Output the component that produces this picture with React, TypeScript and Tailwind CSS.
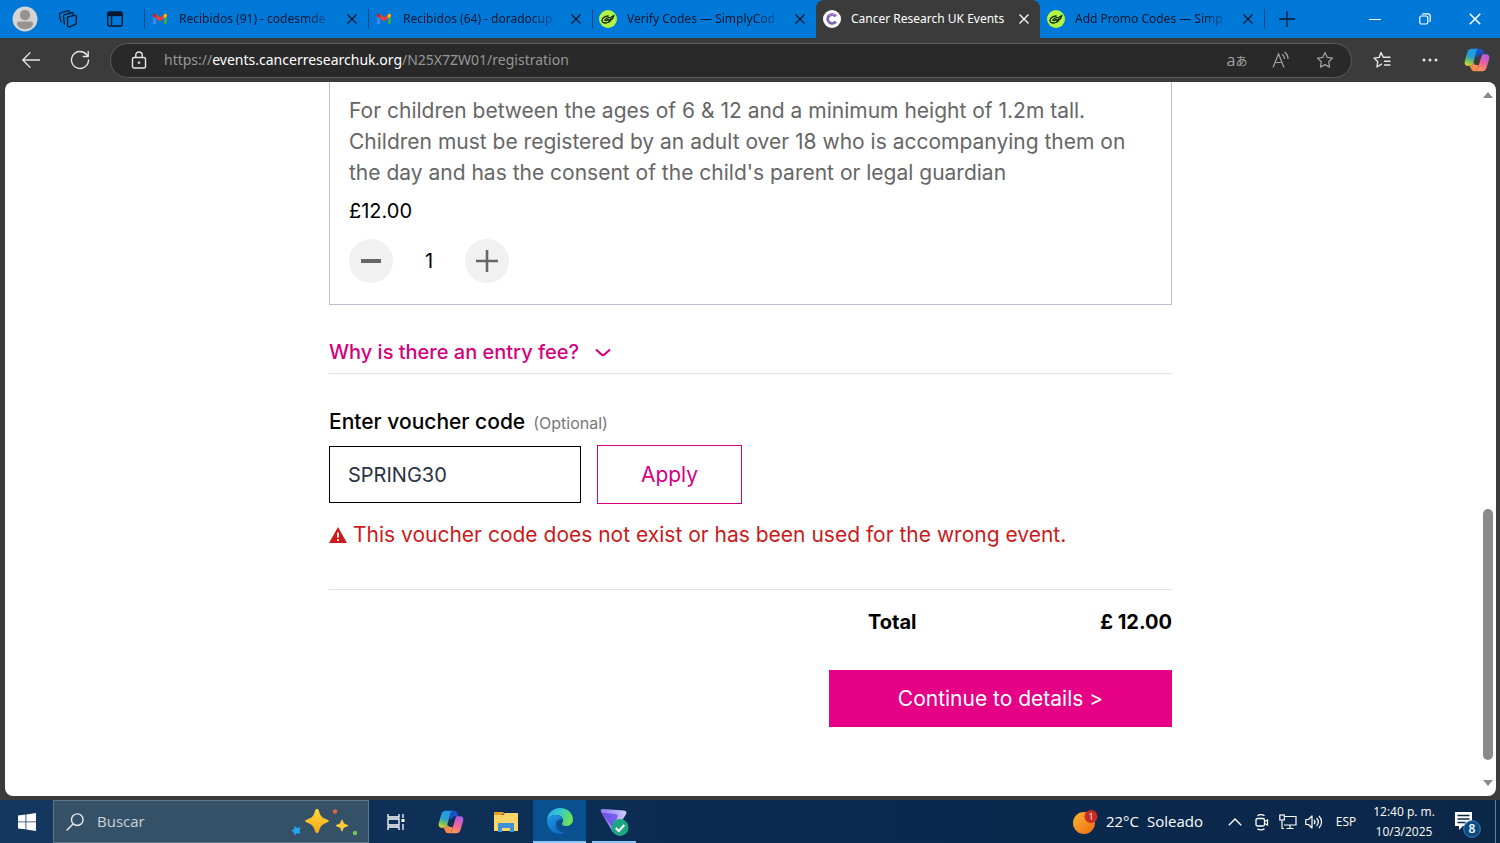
import { useState } from 'react';
import type { ReactNode } from 'react';

type IconProps = { className?: string };

function GmailIcon() {
  return (
    <svg viewBox="0 0 18 14" className="h-3 w-4 shrink-0">
      <path d="M1 2.500V13h3.500V5.500z" fill="#4285f4" />
      <path d="M17 2.500V13h-3.500V5.500z" fill="#34a853" />
      <path d="M1 2.500C1 .6 2.700.3 4 1.300L9 5.300l5-4v4.600L9 9.800 4 5.900 1 3.500z" fill="#ea4335" />
      <path d="M13.500 1.700C15.300.3 17 .6 17 2.500v1.200l-3.500 2.800z" fill="#fbbc04" />
      <path d="M1 2.500C1 1 2.600.3 4.500 1.700v4.800L1 3.700z" fill="#c5221f" />
    </svg>
  );
}

function SimplyIcon() {
  return (
    <svg viewBox="0 0 18 18" className="size-[18px] shrink-0">
      <circle cx="9" cy="9" r="9" fill="#b0f545" />
      <g fill="none" stroke="#14230a" strokeWidth="1.300" strokeLinecap="round" strokeLinejoin="round">
        <path d="M9.200 6C5.500 6 3 8.300 3 10.500c0 2.500 3.200 3 5.700 2 2-.8 3-2.200 2.800-3.500" />
        <path d="M6 10c.8-1.700 3-2.700 6-2.700l3-1.800-1.500 3c-1.200 1.600-3 1.800-4.500 1.500" />
        <path d="M6 10.200c1 .6 2 .3 3.200-.7" />
      </g>
    </svg>
  );
}

function CancerResearchIcon() {
  return (
    <svg viewBox="0 0 18 18" className="size-[18px] shrink-0">
      <circle cx="9" cy="9" r="9" fill="#fff" />
      <path d="M12.800 6.600A4.400 4.400 0 1 0 12.800 11.400" fill="none" stroke="#7a63b4" strokeWidth="2.800" />
      <path d="M12.800 6.600A4.400 4.400 0 0 0 6 5.800M5.500 11.500l1 1" fill="none" stroke="#c98acb" strokeWidth="1.400" strokeDasharray="1.500 1.200" />
    </svg>
  );
}

function CloseIcon({ className }: IconProps) {
  return (
    <svg viewBox="0 0 12 12" className={className} fill="none" stroke="currentColor" strokeWidth="1.300">
      <path d="M1.500 1.500l9 9M10.500 1.500l-9 9" />
    </svg>
  );
}

function CopilotIcon({ id }: { id: string }) {
  return (
    <svg viewBox="0 0 26 24" className="h-6 w-[26px]">
      <defs>
        <linearGradient id={`${id}-a`} x1=".5" y1="0" x2=".2" y2="1">
          <stop offset="0" stopColor="#1b9bf0" />
          <stop offset=".45" stopColor="#2a9fd0" />
          <stop offset=".75" stopColor="#7cc557" />
          <stop offset="1" stopColor="#f5d32a" />
        </linearGradient>
        <linearGradient id={`${id}-b`} x1=".6" y1="0" x2=".3" y2="1">
          <stop offset="0" stopColor="#b15be8" />
          <stop offset=".5" stopColor="#f0609a" />
          <stop offset="1" stopColor="#fd9a52" />
        </linearGradient>
      </defs>
      <path d="M8 .8h7c-1.600.6-2.300 2-2.800 3.700L9.300 14.700C8.600 17 7.500 17.800 5.500 17.800H4C1.200 17.800.200 15.700.8 13.200l2.500-9C3.900 2 5.400.8 8 .8z" fill={`url(#${id}-a)`} />
      <path d="M14 .8h2.500c1.600 0 2.400 1 2.900 2.500l.8 2.900h-2.700c-1.700 0-2.600.8-3.200 2.300l-1.500.5-1.500-.5 1.200-4.300c.4-1.600.6-2.700 1.500-3.400z" fill="#1c50c4" />
      <path d="M19 6.200h3c2.800 0 3.800 2 3.200 4.600l-2.500 8.800c-.6 2.400-2.100 3.600-4.500 3.600h-6.500c1.300-.7 2-2 2.500-3.700l2.800-9.800c.4-1.600.8-2.800 2-3.500z" fill={`url(#${id}-b)`} />
      <path d="M5.500 17.800c2 0 3.100-.8 3.800-3.100l2.200 2.300h3.200l-.7 2.800c-.5 2-1.200 3.400-2.800 3.400H10c-1.600 0-2.500-1-3-2.600z" fill="#f68a4c" />
    </svg>
  );
}

function EdgeIcon() {
  return (
    <svg viewBox="0 0 28 28" className="size-7">
      <defs>
        <linearGradient id="edge-top" x1="0" y1="0" x2="1" y2=".3">
          <stop offset="0" stopColor="#2aa8e8" />
          <stop offset=".5" stopColor="#35c7cf" />
          <stop offset="1" stopColor="#6be058" />
        </linearGradient>
        <linearGradient id="edge-left" x1="0" y1="0" x2=".6" y2="1">
          <stop offset="0" stopColor="#1f9ae4" />
          <stop offset="1" stopColor="#0f6ac4" />
        </linearGradient>
      </defs>
      <path d="M1 13C1.500 6 7 1 14 1c8 0 13 5.500 13 11.500 0 4-3 6.500-6.500 6.500-3 0-4.500-1-4.500-2.300 0-.9 1.200-1.500 1.200-3.400C17.200 10.500 14.500 8 10.500 8 6 8 2.500 10 1 13z" fill="url(#edge-top)" />
      <path d="M1 13c1.500-3.500 5-5 8.500-5 4.200 0 7 2.300 7.600 4.600C15.500 11.500 10 12 10 17.500c0 5 4.200 8 8.500 7.700C17 26.500 15.500 27 14 27 6.500 27 .5 20.500 1 13z" fill="url(#edge-left)" />
      <path d="M10 17.500c0 5 5.500 7.500 9.500 6.500 2-.5 4.200-2 5.500-4-2.500 1.300-9 1.500-10.500-2.500-.8-2 .2-3.700 1.500-4.500-3-.8-6 1.500-6 4.500z" fill="#124c91" />
    </svg>
  );
}

const tabs = [
  { title: 'Recibidos (91) - codesmde', icon: <GmailIcon />, active: false },
  { title: 'Recibidos (64) - doradocup', icon: <GmailIcon />, active: false },
  { title: 'Verify Codes — SimplyCod', icon: <SimplyIcon />, active: false },
  { title: 'Cancer Research UK Events', icon: <CancerResearchIcon />, active: true },
  { title: 'Add Promo Codes — Simp', icon: <SimplyIcon />, active: false },
];

function TabBar() {
  return (
    <header className="flex h-[38px] bg-[#0078d7] text-[#06182e]">
      <div className="flex w-36 shrink-0 items-center gap-5 pl-3">
        <button aria-label="Perfil">
          <svg viewBox="0 0 26 26" className="size-[26px]">
            <circle cx="13" cy="13" r="12.500" fill="#d6d4d2" />
            <circle cx="13" cy="9" r="5.200" fill="#969492" />
            <path d="M5 17.500c0-1.300 1-2 2-2h12c1 0 2 .7 2 2 0 3.500-4 5.700-8 5.700s-8-2.200-8-5.700z" fill="#969492" />
          </svg>
        </button>
        <button aria-label="Áreas de trabajo" className="mr-2">
          <svg viewBox="0 0 20 20" className="size-5" fill="none" stroke="currentColor" strokeWidth="1.300" strokeLinejoin="round">
            <path d="M9.500 8.200l7-1.800c1-.2 1.800.3 1.800 1.300v6.200c0 .8-.4 1.300-1.200 1.500l-5.600 2.400c-1.200.4-2-.2-2-1.400z" />
            <path d="M6.500 15.500l-1-8c-.1-1 .3-1.600 1.200-1.800L14.500 3.500l1 2.500M3 13.500L1.500 5.800C1.300 4.900 1.800 4.200 2.600 4L10.500 1.500l1 2.200" />
          </svg>
        </button>
        <button aria-label="Menú de acciones de pestaña">
          <svg viewBox="0 0 18 18" className="size-[18px]" fill="none" stroke="currentColor" strokeWidth="1.400">
            <rect x="1.700" y="2" width="14.600" height="14" rx="2" />
            <path d="M1.700 4.200h14.600" strokeWidth="4" />
            <path d="M5.500 6v10" />
          </svg>
        </button>
      </div>
      <nav className="flex min-w-0 flex-1">
        {tabs.map((tab, index) => (
          <div
            key={index}
            className={
              tab.active
                ? 'flex max-w-56 min-w-0 flex-1 items-center rounded-t-lg border-l border-transparent bg-[#3b3b3b] pr-2.5 pl-1.5 text-white'
                : 'flex max-w-56 min-w-0 flex-1 items-center pr-2.5'
            }
          >
            {!tab.active && <span className={tabs[index - 1]?.active ? 'h-5 w-px' : 'h-5 w-px bg-[#064a86]'} />}
            <button className={tab.active ? 'flex min-w-0 flex-1 items-center gap-2.5' : 'flex min-w-0 flex-1 items-center gap-2.5 pl-1.5'}>
              <span className="flex w-[18px] shrink-0 justify-center">{tab.icon}</span>
              <span
                className={
                  tab.active
                    ? "flex-1 text-left font-['Noto_Sans',sans-serif] text-xs whitespace-nowrap"
                    : "flex-1 text-left font-['Noto_Sans',sans-serif] text-xs whitespace-nowrap [mask-image:linear-gradient(to_right,#000_80%,transparent)]"
                }
              >
                {tab.title}
              </span>
            </button>
            <button aria-label="Cerrar pestaña" className="pl-2">
              <CloseIcon className="size-3" />
            </button>
          </div>
        ))}
        <span className="h-5 w-px shrink-0 self-center bg-[#064a86]" />
        <button aria-label="Nueva pestaña" className="px-3.5">
          <svg viewBox="0 0 16 16" className="size-4" fill="none" stroke="currentColor" strokeWidth="1.300">
            <path d="M8 0v16M0 8h16" />
          </svg>
        </button>
      </nav>
      <div className="flex shrink-0 text-white">
        <button aria-label="Minimizar" className="flex w-[50px] items-center justify-center">
          <span className="h-px w-3 bg-white" />
        </button>
        <button aria-label="Restaurar" className="flex w-[50px] items-center justify-center">
          <svg viewBox="0 0 12 12" className="size-3" fill="none" stroke="currentColor" strokeWidth="1.200">
            <rect x=".8" y="3" width="8" height="8" rx="1.500" />
            <path d="M3.200 1.500C3.500 1 4 .8 4.500.8H9c1.200 0 2.200 1 2.200 2.200v4.500c0 .6-.3 1-.8 1.300" />
          </svg>
        </button>
        <button aria-label="Cerrar" className="flex w-[50px] items-center justify-center">
          <CloseIcon className="size-[14px]" />
        </button>
      </div>
    </header>
  );
}

const starPath = 'M9 1.500l2.300 4.900 5.200.7-3.800 3.700.9 5.300L9 13.600l-4.600 2.500.9-5.300L1.500 7.100l5.200-.7z';

function Toolbar() {
  return (
    <div className="flex h-11 items-center bg-[#3b3b3b] text-[#e6e6e6]">
      <button aria-label="Atrás" className="flex w-[62px] justify-center">
        <svg viewBox="0 0 18 16" className="h-4 w-[18px]" fill="none" stroke="currentColor" strokeWidth="1.300" strokeLinecap="round" strokeLinejoin="round">
          <path d="M17.500 8H1M8 .8L.8 8 8 15.200" />
        </svg>
      </button>
      <button aria-label="Actualizar" className="flex w-9 justify-center">
        <svg viewBox="0 0 20 20" className="size-5" fill="none" stroke="currentColor" strokeWidth="1.400" strokeLinecap="round" strokeLinejoin="round">
          <path d="M18.500 10A8.500 8.500 0 1 1 16.500 4.500l1.500 1.700M18.200 1.500v5h-5" />
        </svg>
      </button>
      <div className="ml-3 flex h-[35px] min-w-0 flex-1 items-center rounded-full border border-[#5c5c5c] bg-[#292929] pr-1 pl-5">
        <svg viewBox="0 0 16 18" className="mr-[17px] h-[18px] w-4 shrink-0" fill="none" stroke="currentColor" strokeWidth="1.400">
          <rect x="1.500" y="6.500" width="13" height="10.500" rx="1.500" />
          <path d="M4.800 6.500V4C4.800 2.200 6.200 1 8 1s3.200 1.200 3.200 3v2.500" />
          <circle cx="8" cy="11.700" r="1" fill="currentColor" strokeWidth=".6" />
        </svg>
        <a href="#registration" className="flex-1 truncate font-['Noto_Sans',sans-serif] text-sm text-[#979797]">
          https://<span className="text-white">events.cancerresearchuk.org</span>/N25X7ZW01/registration
        </a>
        <div className="flex shrink-0 items-center text-[#a3a3a3]">
          <button aria-label="Traducir" className="flex w-11 items-baseline justify-center text-base leading-5">
            a<span className="font-['Noto_Sans_CJK_JP',sans-serif] text-xs leading-4">あ</span>
          </button>
          <button aria-label="Leer en voz alta" className="flex w-11 justify-center">
            <svg viewBox="0 0 18 18" className="size-[18px]" fill="none" stroke="currentColor" strokeWidth="1.200" strokeLinecap="round">
              <path d="M1.200 16L6.500 2.800 11.800 16M3 11.500h7M10.500 3.500c1.300 1 1.900 2.300 1.900 4M13 1.500c2 1.400 3 3.600 3 6" />
            </svg>
          </button>
          <button aria-label="Agregar a favoritos" className="flex w-11 justify-center">
            <svg viewBox="0 0 18 18" className="size-[18px]" fill="none" stroke="currentColor" strokeWidth="1.200" strokeLinejoin="round">
              <path d={starPath} />
            </svg>
          </button>
        </div>
      </div>
      <button aria-label="Favoritos" className="ml-1.5 flex w-12 justify-center">
        <svg viewBox="0 0 20 18" className="h-[18px] w-5" fill="none" stroke="currentColor" strokeWidth="1.400" strokeLinejoin="round" strokeLinecap="round">
          <path d="M9.500 13.200L4.900 16l.9-5.300L2 7.100l5.200-.7L9 1.500l2.300 4.700H18M12.500 10.200H18M12.500 14H18" />
        </svg>
      </button>
      <button aria-label="Configuración y más" className="flex w-12 justify-center">
        <svg viewBox="0 0 16 4" className="h-1 w-4" fill="currentColor">
          <circle cx="2" cy="2" r="1.500" />
          <circle cx="8" cy="2" r="1.500" />
          <circle cx="14" cy="2" r="1.500" />
        </svg>
      </button>
      <button aria-label="Copilot" className="flex w-[46px] justify-center">
        <CopilotIcon id="toolbar-copilot" />
      </button>
    </div>
  );
}

function Registration() {
  const [quantity, setQuantity] = useState(1);
  const [voucher, setVoucher] = useState('SPRING30');
  const price = (quantity * 12).toFixed(2);

  return (
    <main className="mx-auto w-full max-w-[843px] font-['Inter',sans-serif] text-[21px] leading-[31px] text-black">
      <section className="border border-t-0 border-[#b9bfd4] px-[19px] pt-[13px] pb-[21px]">
        <p className="text-[#666]">
          For children between the ages of 6 &amp; 12 and a minimum height of 1.2m tall. Children must be registered by an
          adult over 18 who is accompanying them on the day and has the consent of the child's parent or legal guardian
        </p>
        <p className="mt-2 text-xl leading-[31px]">£12.00</p>
        <div className="mt-3 flex items-center">
          <button
            aria-label="Remove one"
            onClick={() => setQuantity(Math.max(0, quantity - 1))}
            className="flex size-11 items-center justify-center rounded-full bg-[#f1f1f1]"
          >
            <span className="h-1 w-5 bg-[#666]" />
          </button>
          <span className="w-[72px] text-center text-xl">{quantity}</span>
          <button
            aria-label="Add one"
            onClick={() => setQuantity(quantity + 1)}
            className="flex size-11 items-center justify-center rounded-full bg-[#f1f1f1]"
          >
            <svg viewBox="0 0 22 22" className="size-[22px]" fill="none" stroke="#666" strokeWidth="2.600">
              <path d="M11 0v22M0 11h22" />
            </svg>
          </button>
        </div>
      </section>

      <div className="mt-8 border-b border-[#e1e2ea] pb-[5px]">
        <button className="flex items-center gap-3 text-xl leading-[31px] font-medium text-[#d6007f]">
          Why is there an entry fee?
          <svg viewBox="0 0 16 9" className="ml-1 h-[9px] w-4" fill="none" stroke="currentColor" strokeWidth="2.200" strokeLinejoin="round">
            <path d="M1 1.500l5.500 5c1 .9 2 .9 3 0l5.500-5" />
          </svg>
        </button>
      </div>

      <form className="mt-8" onSubmit={(event) => event.preventDefault()}>
        <label htmlFor="voucher" className="flex items-baseline gap-2 font-medium">
          Enter voucher code <span className="text-base font-normal text-[#777]">(Optional)</span>
        </label>
        <div className="mt-2 flex items-center gap-4">
          <input
            id="voucher"
            type="text"
            value={voucher}
            onChange={(event) => setVoucher(event.target.value)}
            className="h-[57px] w-[252px] border border-black px-[18px] text-xl text-[#2b3240]"
          />
          <button type="submit" className="h-[59px] w-[145px] border border-[#d6007f] text-[#d6007f]">
            Apply
          </button>
        </div>
        <p className="mt-[15px] flex items-center gap-1.5 text-[#cc1a1a]">
          <svg viewBox="0 0 18 16" className="h-4 w-[18px] shrink-0">
            <path d="M9 0l9 16H0z" fill="currentColor" />
            <path d="M9 5.500v5M9 12v2" stroke="#fff" strokeWidth="1.800" />
          </svg>
          This voucher code does not exist or has been used for the wrong event.
        </p>
      </form>

      <div className="mt-[39px] flex flex-col items-end border-t border-[#e2e2e2] pt-[17px]">
        <div className="flex w-[304px] justify-between text-xl leading-[31px] font-bold">
          <span>Total</span>
          <span>£ {price}</span>
        </div>
        <button className="mt-8 mb-[68px] h-[57px] w-[343px] bg-[#e60086] text-white">Continue to details &gt;</button>
      </div>
    </main>
  );
}

function TaskButton({ label, className, children }: { label: string; className: string; children: ReactNode }) {
  return (
    <button aria-label={label} className={`flex h-full shrink-0 items-center justify-center ${className}`}>
      {children}
    </button>
  );
}

function Taskbar() {
  return (
    <footer className="flex h-[43px] items-center bg-linear-to-r from-[#143860] via-[#0a2a50] to-[#0b2748] text-white">
      <TaskButton label="Inicio" className="w-[53px]">
        <svg viewBox="0 0 18 18" className="size-[18px]" fill="currentColor">
          <path d="M0 2.500L7.500 1.500v7H0zM8.300 1.400L18 0v8.500H8.300zM0 9.300h7.500v7L0 15.400zM8.300 9.300H18V18l-9.700-1.400z" />
        </svg>
      </TaskButton>
      <div className="flex h-full w-[316px] shrink-0 items-center border border-[#5d7688] bg-[#355167] pr-2.5 pl-3">
        <svg viewBox="0 0 18 18" className="mr-[13px] size-[18px] shrink-0" fill="none" stroke="#e8edf1" strokeWidth="1.400">
          <circle cx="11.300" cy="6.700" r="5.800" />
          <path d="M7 11L.6 17.400" />
        </svg>
        <input aria-label="Buscar" placeholder="Buscar" className="min-w-0 flex-1 text-[15px] placeholder:text-[#cbd3da]" />
        <svg viewBox="0 0 68 30" className="h-[30px] w-[68px] shrink-0">
          <defs>
            <linearGradient id="spark" x1="0" y1="0" x2="0" y2="1">
              <stop offset="0" stopColor="#ffd935" />
              <stop offset="1" stopColor="#f7a71b" />
            </linearGradient>
          </defs>
          <path d="M27 2c1 0 1.500.6 2 2 1.300 5 3 6.800 8 8.500 2.600.9 2.600 2.100 0 3-5 1.700-6.700 4-8 8.500-.8 2.700-3.200 2.700-4 0-1.300-4.500-3-6.800-8-8.500-2.600-.9-2.600-2.100 0-3 5-1.700 6.700-3.500 8-8.500.5-1.400 1-2 2-2z" fill="url(#spark)" />
          <path d="M52 12.500c.8 0 1 2.500 2 3.700 1 1 4.200 1.300 4.200 2.300s-3.200 1.300-4.200 2.300c-1 1.200-1.200 3.700-2 3.700s-1-2.500-2-3.700c-1-1-4.200-1.300-4.200-2.300s3.200-1.300 4.200-2.300c1-1.200 1.200-3.700 2-3.700z" fill="#fccb36" />
          <path d="M4.500 19l2.800 2 3.200-.8-1 3.300 1 3.500-3.200-1-2.800 2.500-.7-3.500L1 23.500l3-1.200z" fill="#25a5ee" />
          <circle cx="45" cy="4.500" r="2.200" fill="#dd6a38" />
          <circle cx="65" cy="26" r="2.200" fill="#79c257" />
        </svg>
      </div>
      <TaskButton label="Vista de tareas" className="w-[54px]">
        <svg viewBox="0 0 18 18" className="size-[18px]" fill="none" stroke="currentColor" strokeWidth="1.300">
          <path d="M1 1v3h11V1M1 17v-3h11v3M1 6h11v6H1zM16 1v4M16 11v6" />
          <path d="M14.500 7.500h3" strokeWidth="3" />
        </svg>
      </TaskButton>
      <TaskButton label="Copilot" className="w-14">
        <CopilotIcon id="task-copilot" />
      </TaskButton>
      <TaskButton label="Explorador de archivos" className="w-[54px]">
        <svg viewBox="0 0 24 20" className="h-5 w-6">
          <path d="M0 0h9l2 2h-3v2H0z" fill="#e2a21b" />
          <path d="M0 3h9l2-2h13v18H0z" fill="#fbd568" />
          <path d="M4 20v-8c0-.6.400-1 1-1h14c.6 0 1 .4 1 1v8h-4v-4H8v4z" fill="#3c92d9" />
        </svg>
      </TaskButton>
      <TaskButton label="Microsoft Edge" className="w-[53px] border-b-2 border-[#8cc4f5] bg-[#09508f]">
        <EdgeIcon />
      </TaskButton>
      <TaskButton label="Proton VPN" className="ml-1.5 w-11 border-b-2 border-[#8cc4f5]">
        <svg viewBox="0 0 30 28" className="mt-0.5 h-7 w-[30px]">
          <defs>
            <linearGradient id="vpn" x1="0" y1="0" x2="1" y2="0">
              <stop offset="0" stopColor="#8f7bf5" />
              <stop offset=".6" stopColor="#b3a8fc" />
              <stop offset="1" stopColor="#d3c9ff" />
            </linearGradient>
          </defs>
          <path d="M3.500 1L25 2.500c2 .2 3 2 2 3.800L16.500 23c-1 1.500-2.700 1.400-3.500-.2L2 4C1.200 2.300 1.800.9 3.500 1z" fill="url(#vpn)" />
          <path d="M2.500 4.800l14 1.200c2 .3 2.800 2 1.700 3.700L12.800 19z" fill="#5f3fe0" opacity=".7" />
          <circle cx="21" cy="19.500" r="8.500" fill="#1ca581" />
          <path d="M16.800 20l3 3 5.500-6" fill="none" stroke="#fff" strokeWidth="2" />
        </svg>
      </TaskButton>
      <div className="flex-1" />
      <button className="flex shrink-0 items-center gap-2 text-[15px] whitespace-nowrap">
        <svg viewBox="0 0 26 26" className="size-[26px]">
          <defs>
            <linearGradient id="sun" x1="0" y1="0" x2="1" y2="1">
              <stop offset="0" stopColor="#fcb72f" />
              <stop offset="1" stopColor="#ed6a13" />
            </linearGradient>
          </defs>
          <circle cx="12" cy="14" r="11" fill="url(#sun)" />
          <circle cx="19" cy="7.500" r="6.500" fill="#c92d28" />
          <text x="19" y="11" textAnchor="middle" fontSize="9" fill="#fff">1</text>
        </svg>
        <span>22°C</span>
        <span>Soleado</span>
      </button>
      <TaskButton label="Mostrar iconos ocultos" className="ml-[18px] w-7">
        <svg viewBox="0 0 14 8" className="h-2 w-3.5" fill="none" stroke="currentColor" strokeWidth="1.400">
          <path d="M.8 7.200L7 1l6.200 6.200" />
        </svg>
      </TaskButton>
      <TaskButton label="Cámara" className="w-[26px]">
        <svg viewBox="0 0 14 18" className="h-[18px] w-3.5" fill="none" stroke="currentColor" strokeWidth="1.300">
          <rect x="1" y="5.500" width="8.500" height="7.500" rx="1.500" />
          <path d="M9.500 8.500L12.500 7v5l-3-1.500M2.500 2.800c1.500-1.500 5-1.500 7 0M2.500 15.700c1.500 1.500 5 1.500 7 0" />
        </svg>
      </TaskButton>
      <TaskButton label="Red" className="w-[26px]">
        <svg viewBox="0 0 18 16" className="h-4 w-[18px]" fill="none" stroke="currentColor" strokeWidth="1.200">
          <path d="M6 2.500h11v8.500H5M11 11v3.500M7.500 14.500h7M3 6.500v8h2" />
          <rect x=".8" y="1" width="4.500" height="5" />
        </svg>
      </TaskButton>
      <TaskButton label="Volumen" className="w-[26px]">
        <svg viewBox="0 0 18 16" className="h-4 w-[18px]" fill="none" stroke="currentColor" strokeWidth="1.200" strokeLinejoin="round">
          <path d="M.8 5.500h2.700L7 2v12l-3.500-3.500H.8zM9 5.800c1.200 1.300 1.200 3.100 0 4.400M11.500 4c2.200 2.400 2.200 5.600 0 8M14 2c3.400 3.500 3.400 8.500 0 12" />
        </svg>
      </TaskButton>
      <button className="w-[38px] text-center text-xs">ESP</button>
      <div className="w-[78px] shrink-0 text-center text-xs leading-5 whitespace-nowrap">
        <p>12:40 p. m.</p>
        <p>10/3/2025</p>
      </div>
      <TaskButton label="Notificaciones" className="w-12">
        <svg viewBox="0 0 28 28" className="mt-1 size-7">
          <path d="M2 2h17v14h-9l-4 4v-4H2z" fill="#fff" />
          <path d="M4.500 5.500h12M4.500 9h12M4.500 12.500h8" stroke="#0b2748" strokeWidth="1.300" />
          <circle cx="19" cy="19" r="8.300" fill="#0c4c85" stroke="#3f83b8" />
          <text x="19" y="23" textAnchor="middle" fontSize="12" fontWeight="600" fill="#fff">8</text>
        </svg>
      </TaskButton>
      <button aria-label="Mostrar escritorio" className="ml-1 h-full w-[5px] border-l border-[#6b7f96]" />
    </footer>
  );
}

export default function App() {
  return (
    <div className="flex min-h-screen flex-col bg-[#3b3b3b] font-['Open_Sans',sans-serif]">
      <TabBar />
      <Toolbar />
      <div className="mr-1 mb-1 ml-[5px] flex flex-1 rounded-lg bg-white">
        <div className="min-w-0 flex-1 pl-4">
          <Registration />
        </div>
        <div className="flex w-4 flex-col items-center py-2.5">
          <svg viewBox="0 0 10 6" className="h-1.5 w-2.5" fill="#8a8a8a">
            <path d="M5 0l5 6H0z" />
          </svg>
          <div className="flex-1" />
          <div className="mb-5 h-[251px] w-2.5 rounded-full bg-[#8a8a8a]" />
          <svg viewBox="0 0 10 6" className="h-1.5 w-2.5" fill="#8a8a8a">
            <path d="M5 6l5-6H0z" />
          </svg>
        </div>
      </div>
      <Taskbar />
    </div>
  );
}
